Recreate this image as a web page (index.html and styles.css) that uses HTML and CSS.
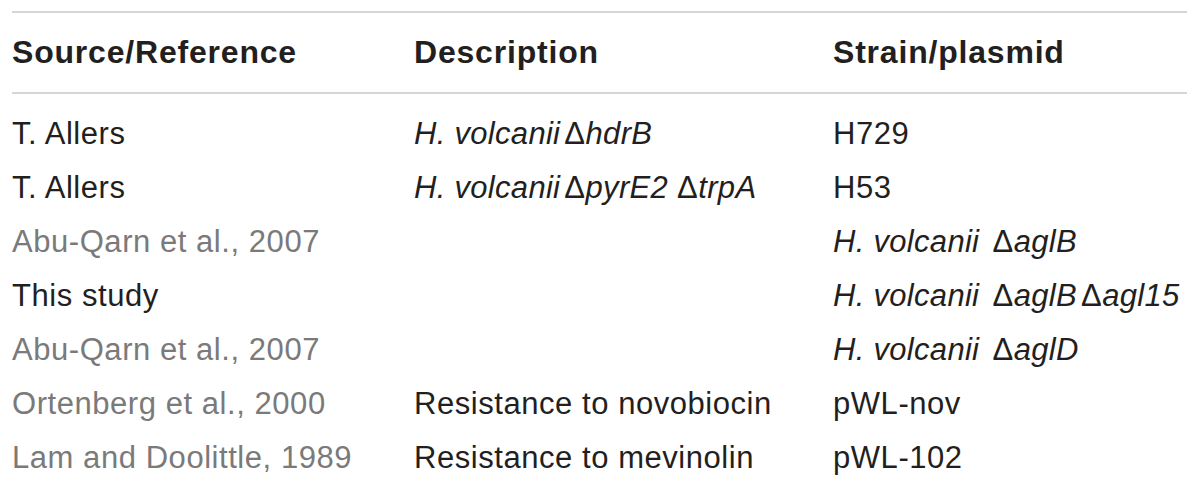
FILE: index.html
```html
<!DOCTYPE html>
<html lang="en">
<head>
<meta charset="utf-8">
<title>Strains and plasmids</title>
<link rel="stylesheet" href="styles.css">
</head>
<body>
<table class="tbl">
  <colgroup>
    <col class="c1"><col class="c2"><col class="c3">
  </colgroup>
  <thead>
    <tr>
      <th>Source/Reference</th>
      <th>Description</th>
      <th>Strain/plasmid</th>
    </tr>
  </thead>
  <tbody>
    <tr class="first">
      <td>T. Allers</td>
      <td><i>H. volcanii</i><span class="d">Δ</span><i>hdrB</i></td>
      <td>H729</td>
    </tr>
    <tr>
      <td>T. Allers</td>
      <td><i>H. volcanii</i><span class="d">Δ</span><i>pyrE2</i><span class="d wide">Δ</span><i>trpA</i></td>
      <td>H53</td>
    </tr>
    <tr>
      <td class="ref">Abu-Qarn et al., 2007</td>
      <td></td>
      <td><i>H. volcanii</i> <span class="d">Δ</span><i>aglB</i></td>
    </tr>
    <tr>
      <td>This study</td>
      <td></td>
      <td><i>H. volcanii</i> <span class="d">Δ</span><i>aglB</i><span class="d">Δ</span><i>agl15</i></td>
    </tr>
    <tr>
      <td class="ref">Abu-Qarn et al., 2007</td>
      <td></td>
      <td><i>H. volcanii</i> <span class="d">Δ</span><i>aglD</i></td>
    </tr>
    <tr>
      <td class="ref">Ortenberg et al., 2000</td>
      <td>Resistance to novobiocin</td>
      <td>pWL-nov</td>
    </tr>
    <tr>
      <td class="ref">Lam and Doolittle, 1989</td>
      <td>Resistance to mevinolin</td>
      <td>pWL-102</td>
    </tr>
  </tbody>
</table>
</body>
</html>
```

FILE: styles.css
```css
html, body {
  margin: 0;
  padding: 0;
  background: #ffffff;
}
body {
  padding: 11px 13px 0 12px;
  font-family: "Liberation Sans", Arial, Helvetica, sans-serif;
  color: #231f20;
}
.tbl {
  width: 1175px;
  border-collapse: collapse;
  table-layout: fixed;
}
.c1 { width: 402px; }
.c2 { width: 419px; }
.c3 { width: 354px; }
.tbl thead tr {
  border-top: 2px solid #d6d6d6;
  border-bottom: 2px solid #d6d6d6;
}
.tbl th {
  text-align: left;
  font-weight: bold;
  font-size: 32px;
  letter-spacing: 0.8px;
  height: 79px;
  padding: 0;
  line-height: 79px;
  white-space: nowrap;
}
.tbl td {
  font-size: 31px;
  letter-spacing: 0.55px;
  line-height: 54px;
  height: 54px;
  padding: 0;
  white-space: nowrap;
  vertical-align: top;
}
.tbl tr.first td {
  padding-top: 13px;
}
.tbl td.ref {
  color: #7a7a7a;
}
.tbl i {
  font-style: italic;
  letter-spacing: 0.3px;
}
.d {
  font-style: normal;
  padding-left: 4px;
}
.d.wide {
  padding-left: 9px;
}
```
